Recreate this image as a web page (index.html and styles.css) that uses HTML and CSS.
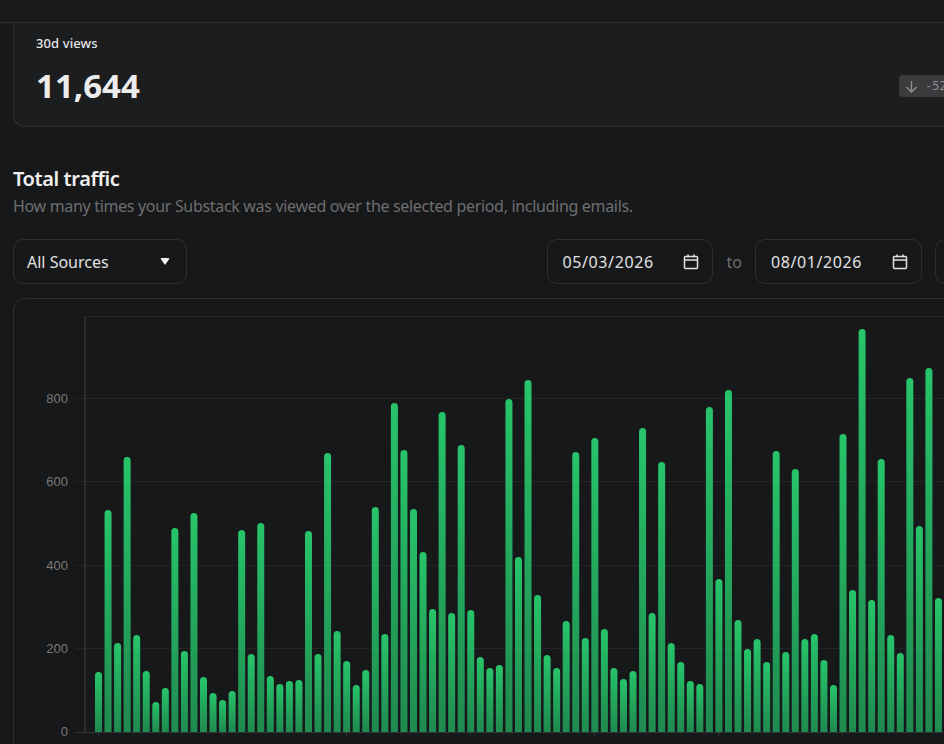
FILE: index.html
```html
<!DOCTYPE html>
<html lang="en">
<head>
    <meta charset="UTF-8">
    <meta name="viewport" content="width=device-width, initial-scale=1.0">
    <title>Total traffic</title>
    <link rel="stylesheet" href="styles.css">
</head>
<body>
    <div class="topbar"></div>
    <div class="page">
        <div class="stat">
            <div class="stat-label">30d views</div>
            <div class="stat-row">
                <div class="stat-value">11,644</div>
                <div class="badge">
                    <svg class="badge-icon" viewBox="0 0 14 14"><path d="M7 1V13M1.500 7.500L7 13L12.500 7.500"/></svg>
                    <span>-52%</span>
                </div>
            </div>
        </div>

        <h2 class="title">Total traffic</h2>
        <p class="sub">How many times your Substack was viewed over the selected period, including emails.</p>

        <div class="filters">
            <div class="field select">
                <span>All Sources</span>
                <span class="caret"></span>
            </div>
            <div class="dates">
                <div class="field date">
                    <span>05/03/2026</span>
                    <svg class="cal" viewBox="0 0 16 16"><path d="M2.5 2.5H13.5A1 1 0 0 1 14.5 3.5V13.5A1 1 0 0 1 13.5 14.5H2.5A1 1 0 0 1 1.500 13.5V3.500A1 1 0 0 1 2.500 2.500ZM1.500 6H14.500M5 .5V3.500M11 .5V3.500"/></svg>
                </div>
                <span class="to">to</span>
                <div class="field date">
                    <span>08/01/2026</span>
                    <svg class="cal" viewBox="0 0 16 16"><path d="M2.5 2.5H13.5A1 1 0 0 1 14.5 3.5V13.5A1 1 0 0 1 13.5 14.5H2.5A1 1 0 0 1 1.500 13.5V3.500A1 1 0 0 1 2.500 2.500ZM1.500 6H14.500M5 .5V3.500M11 .5V3.500"/></svg>
                </div>
                <div class="field more"></div>
            </div>
        </div>

        <div class="chart">
            <svg id="plot" class="plot" viewBox="14 299 968 460">
                <defs>
                    <linearGradient id="barfill" x1="0" y1="0" x2="0" y2="1">
                        <stop offset="0" stop-color="#27c46a"/>
                        <stop offset="1" stop-color="#1f8a4f"/>
                    </linearGradient>
                </defs>
                <g class="grid">
                    <path d="M85 316.500H982M76 398.500H982M76 481.500H982M76 565.500H982M76 648.500H982"/>
                </g>
                <g id="bars"></g>
                <g class="axis">
                    <path class="yline" d="M85 316V732.500"/>
                    <path d="M76 732.500H982"/>
                    <path d="M98.500 732V737M222.500 732V737M346.500 732V737M470.500 732V737M594.500 732V737M718.500 732V737M842.500 732V737"/>
                </g>
                <g class="labels">
                    <text x="68" y="403">800</text>
                    <text x="68" y="486">600</text>
                    <text x="68" y="570">400</text>
                    <text x="68" y="653">200</text>
                    <text x="68" y="736">0</text>
                </g>
            </svg>
        </div>
    </div>

    <script src="chart.js"></script>
</body>
</html>
```

FILE: styles.css
```css
html,body{
    height: 100%;
}
body{
    margin: 0;
    overflow: hidden;
    background-color: #17181a;
    color: #ececec;
    font-family: "Noto Sans", "Open Sans", sans-serif;
}
.topbar{
    height: 22px;
    background-color: #18191b;
    border-bottom: 1px solid #2e2f31;
}
.page{
    width: 970px;
    padding: 0 13px;
}

/* stat card, its top is scrolled under the bar */
.stat{
    height: 104px;
    box-sizing: border-box;
    padding: 11px 22px 0 22px;
    background-color: #1c1d1f;
    border: 1px solid #2e2f31;
    border-top: none;
    border-radius: 0 0 12px 12px;
}
.stat-label{
    font-size: 13px;
    line-height: 18px;
    font-weight: 500;
    letter-spacing: 0.1px;
    color: #e4e4e4;
}
.stat-row{
    display: flex;
    align-items: center;
    justify-content: space-between;
    margin-top: 11px;
}
.stat-value{
    font-size: 33px;
    line-height: 46px;
    font-weight: 700;
    color: #ececec;
}
.badge{
    display: flex;
    align-items: center;
    gap: 7px;
    height: 22px;
    padding: 0 6px;
    border-radius: 4px;
    background-color: #3a3b3d;
    color: #8d8e8f;
    font-size: 12px;
    font-family: "DejaVu Sans Mono", monospace;
}
.badge-icon{
    width: 13px;
    height: 13px;
    fill: none;
    stroke: #8d8e8f;
    stroke-width: 1.500;
}

.title{
    margin: 39px 0 0 0;
    font-size: 20px;
    line-height: 26px;
    font-weight: 600;
    letter-spacing: -0.4px;
    color: #f0f0f0;
}
.sub{
    margin: 3px 0 0 0;
    font-size: 16px;
    line-height: 22px;
    letter-spacing: -0.32px;
    color: #6d6e70;
}

.filters{
    display: flex;
    justify-content: space-between;
    margin-top: 22px;
}
.field{
    display: flex;
    align-items: center;
    justify-content: space-between;
    box-sizing: border-box;
    height: 45px;
    border: 1px solid #2e2f31;
    border-radius: 10px;
    font-size: 16px;
    color: #e2e2e2;
}
.select{
    width: 174px;
    padding: 0 16px 0 13px;
}
.caret{
    width: 0;
    height: 0;
    border-left: 5px solid transparent;
    border-right: 5px solid transparent;
    border-top: 7px solid #f2f2f2;
    border-radius: 2px;
}
.dates{
    display: flex;
    align-items: center;
}
.date{
    width: 166px;
    padding: 0 13px 0 15px;
    letter-spacing: 0.6px;
}
.to + .date{
    width: 167px;
}
.to{
    margin: 0 13px 0 14px;
    font-size: 16px;
    color: #6d6e70;
}
.more{
    width: 48px;
    margin-left: 13px;
}
.cal{
    width: 16px;
    height: 16px;
    fill: none;
    stroke: #e2e2e2;
    stroke-width: 1.500;
}

.chart{
    margin-top: 14px;
    height: 500px;
    border: 1px solid #2e2f31;
    border-radius: 12px;
}
.plot{
    display: block;
    width: 968px;
    height: 460px;
}
.grid path{
    fill: none;
    stroke: #242527;
    stroke-width: 1;
}
.axis path{
    fill: none;
    stroke: #333436;
    stroke-width: 1;
}
.axis .yline{
    stroke-width: 1.500;
}
.labels text{
    font-family: "Liberation Sans", Arial, sans-serif;
    font-size: 13px;
    fill: #77787a;
    text-anchor: end;
}
```

FILE: chart.js
```js
// top edge of each daily bar, in page pixels
var tops = [
    673,511,644,458,636,672,703,689,529,652,514,678,694,701,692,531,655,524,677,685,682,681,
    532,655,454,632,662,686,671,508,635,404,451,510,553,610,413,614,446,611,658,669,666,400,
    558,381,596,656,669,622,453,639,439,630,669,680,672,429,614,463,644,663,682,685,408,580,
    391,621,650,640,663,452,653,470,640,635,661,686,435,591,330,601,460,636,654,379,527,369,599
];
var bars = document.getElementById("bars");
var base = 732;

for(var i = 0; i < tops.length; i++){
    var x = 95 + i * 9.545;
    var bar = document.createElementNS("http://www.w3.org/2000/svg", "path");
    // the tops were read one pixel low
    bar.setAttribute("d", "M" + x + " " + base + "V" + (tops[i] + 2.5) + "a3.500 3.500 0 0 1 7 0V" + base + "Z");
    bar.setAttribute("fill", "url(#barfill)");
    bars.appendChild(bar);
}
```
